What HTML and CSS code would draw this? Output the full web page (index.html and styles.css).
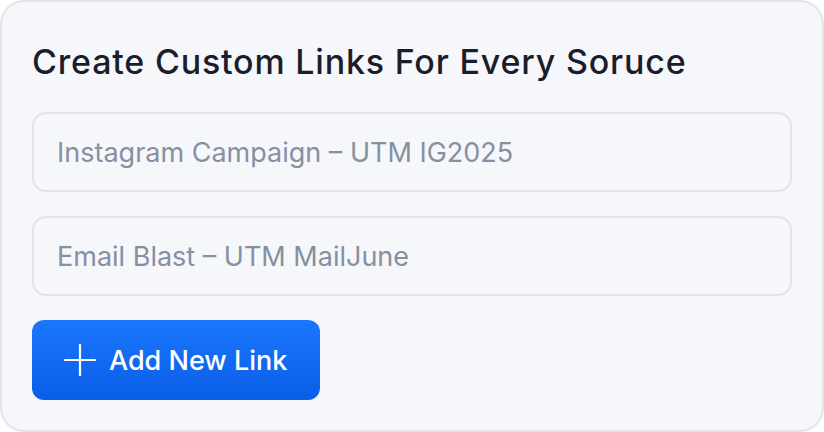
FILE: index.html
```html
<!DOCTYPE html>
<html lang="en">
<head>
    <meta charset="UTF-8">
    <meta name="viewport" content="width=device-width, initial-scale=1.0">
    <title>Custom Links</title>
    <link rel="stylesheet" href="styles.css">
</head>
<body>

<div class="card">
    <h2 class="title">Create Custom Links For Every Soruce</h2>
    <div class="field">Instagram Campaign – UTM IG2025</div>
    <div class="field">Email Blast – UTM MailJune</div>
    <button class="add-btn" type="button">
        <svg width="32" height="32" viewBox="0 0 32 32" fill="none" stroke="#fff" stroke-width="2.2" stroke-linecap="round">
            <path d="M16 1v30M1 16h30"/>
        </svg>
        <span>Add New Link</span>
    </button>
</div>

</body>
</html>
```

FILE: styles.css
```css
* { box-sizing: border-box; }
body { margin: 0; font-family: Inter, "Noto Sans", sans-serif; background: #fff; }

.card {
    width: 824px; height: 432px;
    background: #f6f7fb;
    border: 2px solid #e3e5ea;
    border-radius: 24px;
    padding: 30px 30px;
    display: flex; flex-direction: column; gap: 24px;
}

.title {
    margin: 8px 0 4px;
    font-size: 34px; font-weight: 500;
    color: #1b1d2b; letter-spacing: 0.8px;
    line-height: 44px;
}

.field {
    height: 80px;
    border: 2px solid #e1e3e8;
    border-radius: 14px;
    padding: 0 23px;
    display: flex; align-items: center;
    font-size: 27px; color: #8590a2;
}

.add-btn {
    align-self: flex-start;
    height: 80px; width: 288px;
    border: none; border-radius: 12px;
    background: linear-gradient(180deg, #1b76fb 0%, #0a5ee8 100%);
    color: #fff;
    font-family: inherit; font-size: 27px; font-weight: 500;
    display: flex; align-items: center; gap: 13px;
    padding: 0 32px;
}
```
